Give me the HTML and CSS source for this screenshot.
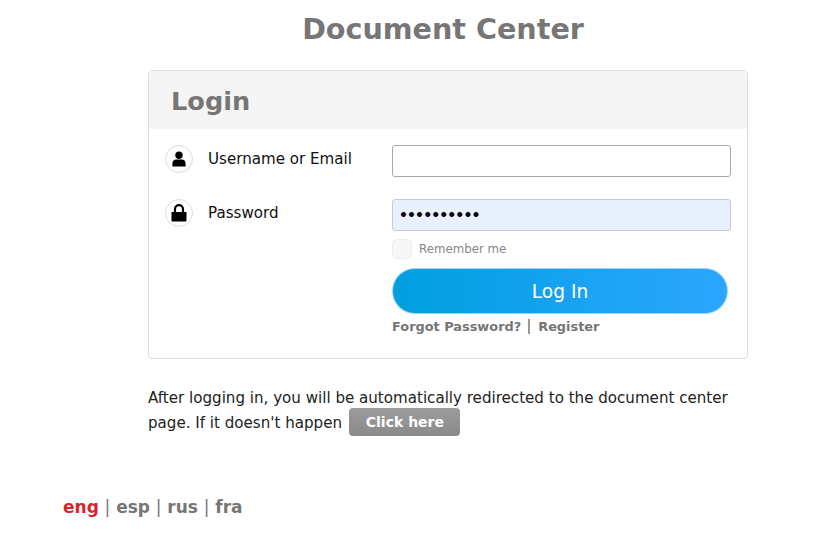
FILE: index.html
```html
<!DOCTYPE html>
<html lang="en">
<head>
    <meta charset="UTF-8">
    <title>Document Center</title>
    <link rel="stylesheet" href="styles.css">
</head>
<body>
    <div class="container">
        <h1>Document Center</h1>
        <div class="panel">
            <h2 class="panel-title">Login</h2>
            <form class="login-form">
                <div class="row">
                    <div class="row-label">
                        <span class="icon-circle">
                            <svg width="16" height="16" viewBox="0 0 16 16"><circle cx="8" cy="4.2" r="3.7"/><path d="M1.4 15.4v-3c0-2.4 1.7-3.9 3.6-3.9h6c1.900 0 3.600 1.500 3.600 3.900v3z"/></svg>
                        </span>
                        <label>Username or Email</label>
                    </div>
                    <input type="text" class="text-input">
                </div>
                <div class="row">
                    <div class="row-label">
                        <span class="icon-circle">
                            <svg width="16" height="18" viewBox="0 0 16 18"><path d="M1.500 8h13c.6 0 1 .4 1 1v7.500c0 .6-.4 1-1 1h-13c-.6 0-1-.4-1-1V9c0-.6.4-1 1-1z"/><path d="M4 9V5.200a4 4 0 0 1 8 0V9" fill="none" stroke="#000" stroke-width="2.200"/></svg>
                        </span>
                        <label>Password</label>
                    </div>
                    <input type="password" class="text-input filled" value="••••••••••">
                </div>
                <div class="controls">
                    <label class="remember"><span class="checkbox"></span>Remember me</label>
                    <button type="button" class="login-btn">Log In</button>
                    <div class="links"><a href="#">Forgot Password?</a><span class="sep"></span><a href="#">Register</a></div>
                </div>
            </form>
        </div>
        <p class="note">After logging in, you will be automatically redirected to the document center<br>page. If it doesn't happen <a href="#" class="click-here">Click here</a></p>
    </div>
    <div class="languages"><a href="#" class="active">eng</a> | <a href="#">esp</a> | <a href="#">rus</a> | <a href="#">fra</a></div>
</body>
</html>
```

FILE: styles.css
```css
body {
    font-family: "DejaVu Sans", Verdana, sans-serif;
    margin: 0;
    padding: 0;
    background-color: #fff;
    color: #222;
}
.container {
    width: 600px;
    margin-left: 148px;
}
h1 {
    margin: 0;
    padding-top: 10px;
    height: 70px;
    box-sizing: border-box;
    text-align: center;
    font-size: 28.6px;
    line-height: 38px;
    color: #767676;
    width: 590px;
}
.panel {
    border: 1px solid #ddd;
    border-radius: 4px;
    height: 289px;
    box-sizing: border-box;
}
.panel-title {
    margin: 0;
    height: 58px;
    padding-left: 22px;
    font-size: 25.6px;
    line-height: 60px;
    color: #767676;
    background-color: #f5f5f5;
}
.login-form {
    padding: 16px 16px 0;
}
.row {
    display: flex;
    justify-content: space-between;
    margin-bottom: 22px;
}
.row-label {
    display: flex;
    align-items: flex-start;
    gap: 15px;
    font-size: 15.1px;
    color: #111;
}
.row-label label {
    line-height: 28px;
}
.icon-circle {
    display: flex;
    align-items: center;
    justify-content: center;
    width: 28px;
    height: 28px;
    border: 1px solid #ddd;
    border-radius: 50%;
    box-sizing: border-box;
}
.text-input {
    width: 339px;
    height: 32px;
    box-sizing: border-box;
    border: 1px solid #a9a9a9;
    border-radius: 3px;
    padding: 0 6px;
    font-family: inherit;
    font-size: 14px;
    font-weight: bold;
    background: #fff;
}
.filled {
    background-color: #e8f0fe;
    border-color: #c6cad2;
    letter-spacing: -0.9px;
}
.controls {
    margin-left: 227px;
    margin-top: -14px;
}
.remember {
    display: flex;
    align-items: center;
    gap: 7px;
    font-size: 11.8px;
    color: #888;
}
.checkbox {
    width: 20px;
    height: 20px;
    box-sizing: border-box;
    border: 1px solid #eee;
    border-radius: 5px;
    background: #f7f7f7;
}
.login-btn {
    display: block;
    width: 336px;
    height: 46px;
    margin-top: 9px;
    border: 1px solid #9fd4f2;
    border-radius: 23px;
    background: linear-gradient(to right, #009fe0, #2ba6ff);
    color: #fff;
    font-family: inherit;
    font-size: 18.6px;
}
.links {
    display: flex;
    align-items: center;
    margin-top: 5px;
    font-size: 12.9px;
    font-weight: bold;
}
.links a {
    color: #767676;
    text-decoration: none;
}
.sep {
    width: 2px;
    height: 15px;
    margin: 0 8px 0 7px;
    background: #999;
}
.note {
    margin: 27px 0 0;
    width: 590px;
    font-size: 15.1px;
    line-height: 25px;
    color: #222;
}
.click-here {
    display: inline-block;
    height: 28px;
    padding: 0 16px 0 17px;
    margin: -5px 0 -1px 2px;
    border-radius: 4px;
    background: linear-gradient(to bottom, #9c9c9c, #8a8a8a);
    color: #fff;
    font-weight: bold;
    font-size: 14px;
    line-height: 28px;
    text-decoration: none;
    vertical-align: middle;
}
.languages {
    margin: 61px 0 0 63px;
    font-size: 17px;
    word-spacing: 0.4px;
    color: #767676;
}
.languages a {
    color: #767676;
    font-weight: bold;
    text-decoration: none;
}
.languages a.active {
    color: #d9232d;
}
```
